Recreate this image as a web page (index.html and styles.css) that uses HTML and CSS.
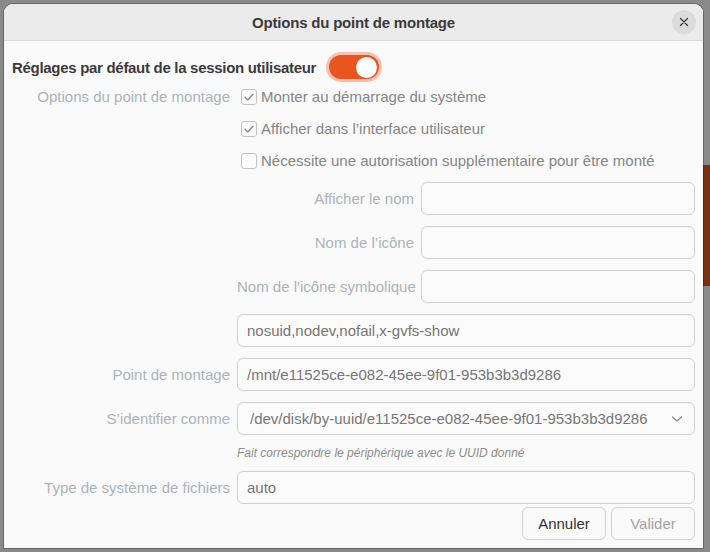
FILE: index.html
```html
<!DOCTYPE html>
<html lang="fr">
<head>
<meta charset="utf-8">
<title>Options du point de montage</title>
<link rel="stylesheet" href="styles.css">
</head>
<body>
<div class="desk-strip"></div>
<div class="dialog">
  <div class="header">
    <div class="title">Options du point de montage</div>
    <div class="close">
      <svg width="10" height="10" viewBox="0 0 10 10"><path d="M1.5 1.5 L8.5 8.5 M8.5 1.5 L1.5 8.5" stroke="#3a3a3a" stroke-width="1.3" stroke-linecap="round" fill="none"/></svg>
    </div>
  </div>
  <div class="content">
    <div class="top-row">
      <span class="bold-label">Réglages par défaut de la session utilisateur</span>
      <span class="switch"><span class="knob"></span></span>
    </div>
    <div class="form">
      <div class="label">Options du point de montage</div>
      <div class="check-row">
        <span class="box checked"><svg width="16" height="16" viewBox="0 0 16 16"><path d="M4 8.2 L6.8 11 L12 5.2" stroke="#888" stroke-width="1.4" fill="none" stroke-linecap="round" stroke-linejoin="round"/></svg></span>
        <span>Monter au démarrage du système</span>
      </div>
      <div></div>
      <div class="check-row">
        <span class="box checked"><svg width="16" height="16" viewBox="0 0 16 16"><path d="M4 8.2 L6.8 11 L12 5.2" stroke="#888" stroke-width="1.4" fill="none" stroke-linecap="round" stroke-linejoin="round"/></svg></span>
        <span>Afficher dans l’interface utilisateur</span>
      </div>
      <div></div>
      <div class="check-row">
        <span class="box"></span>
        <span>Nécessite une autorisation supplémentaire pour être monté</span>
      </div>
      <div></div>
      <div class="subgrid">
        <div class="label">Afficher le nom</div>
        <div class="entry"></div>
        <div class="label">Nom de l’icône</div>
        <div class="entry"></div>
        <div class="label">Nom de l'icône symbolique</div>
        <div class="entry"></div>
      </div>
      <div></div>
      <div class="entry">nosuid,nodev,nofail,x-gvfs-show</div>
      <div class="label">Point de montage</div>
      <div class="entry">/mnt/e11525ce-e082-45ee-9f01-953b3b3d9286</div>
      <div class="label">S’identifier comme</div>
      <div class="entry combo">
        <span>/dev/disk/by-uuid/e11525ce-e082-45ee-9f01-953b3b3d9286</span>
        <svg width="12" height="8" viewBox="0 0 12 8"><path d="M1.5 2 L6 6 L10.5 2" stroke="#8a8a8a" stroke-width="1.2" fill="none" stroke-linecap="round" stroke-linejoin="round"/></svg>
      </div>
      <div></div>
      <div class="hint">Fait correspondre le périphérique avec le UUID donné</div>
      <div class="label">Type de système de fichiers</div>
      <div class="entry">auto</div>
    </div>
    <div class="buttons">
      <div class="btn">Annuler</div>
      <div class="btn disabled">Valider</div>
    </div>
  </div>
</div>
</body>
</html>
```
FILE: styles.css
```css
html, body {
  margin: 0;
  padding: 0;
}
body {
  width: 710px;
  height: 552px;
  overflow: hidden;
  background: #8a8a8a;
  position: relative;
  font-family: "Liberation Sans", Arial, sans-serif;
  font-size: 15px;
  color: #3d3d3d;
}
.desk-strip {
  position: absolute;
  right: 0;
  top: 165px;
  width: 8px;
  height: 121px;
  background: #7b3115;
}
.dialog {
  position: relative;
  margin: 4px 0 0 4px;
  width: 699px;
  height: 544px;
  background: #fafafa;
  border-radius: 9px 9px 0 0;
  box-shadow: 0 0 0 1px rgba(0,0,0,0.25);
  overflow: hidden;
  display: flex;
  flex-direction: column;
}
.header {
  height: 36px;
  flex: none;
  background: #ebebeb;
  border-bottom: 1px solid #dadada;
  display: flex;
  align-items: center;
  justify-content: center;
  position: relative;
}
.title {
  font-weight: bold;
  letter-spacing: -0.2px;
  color: #3a3a3a;
  margin-top: 1px;
}
.close {
  position: absolute;
  right: 7px;
  top: 6px;
  width: 24px;
  height: 24px;
  border-radius: 50%;
  background: #dcdcdc;
  display: flex;
  align-items: center;
  justify-content: center;
}
.content {
  padding: 11px 8px 8px 8px;
  display: flex;
  flex-direction: column;
}
.top-row {
  height: 30px;
  display: flex;
  align-items: center;
}
.bold-label {
  font-weight: bold;
  letter-spacing: -0.3px;
  color: #3a3a3a;
}
.switch {
  margin-left: 13px;
  width: 50px;
  height: 24px;
  border-radius: 13px;
  background: #e95420;
  box-shadow: 0 0 0 3px #f7c3b0;
  display: flex;
  align-items: center;
  justify-content: flex-end;
  padding: 0 2px;
  box-sizing: border-box;
}
.knob {
  width: 21px;
  height: 21px;
  border-radius: 50%;
  background: #ffffff;
}
.form {
  margin-top: 4px;
  display: grid;
  grid-template-columns: 218px 458px;
  grid-template-rows: 21px 21px 21px 121px 33px 33px 33px 14px 33px;
  column-gap: 7px;
  row-gap: 11px;
}
.label {
  color: #aab3bb;
  text-align: right;
  align-self: center;
  white-space: nowrap;
}
.check-row {
  display: flex;
  align-items: center;
  color: #858585;
  padding-left: 4px;
  white-space: nowrap;
}
.box {
  width: 16px;
  height: 16px;
  box-sizing: border-box;
  border: 1px solid #c2c2c2;
  border-radius: 3px;
  background: #fcfcfc;
  margin-right: 4px;
  display: flex;
  align-items: center;
  justify-content: center;
  flex: none;
}
.box svg {
  margin: -1px;
}
.subgrid {
  display: grid;
  grid-template-columns: 177px 274px;
  grid-template-rows: 33px 33px 33px;
  column-gap: 7px;
  row-gap: 11px;
}
.entry {
  height: 33px;
  box-sizing: border-box;
  border: 1px solid #d0d0d0;
  border-radius: 6px;
  background: #fbfbfb;
  color: #767676;
  padding: 0 9px;
  display: flex;
  align-items: center;
  white-space: nowrap;
  overflow: hidden;
}
.combo {
  padding-left: 12px;
  padding-right: 11px;
  justify-content: space-between;
}
.hint {
  font-style: italic;
  font-size: 12px;
  color: #8c8c8c;
  align-self: center;
  white-space: nowrap;
}
.buttons {
  margin-top: 3px;
  display: flex;
  justify-content: flex-end;
  gap: 5px;
}
.btn {
  width: 84px;
  height: 33px;
  box-sizing: border-box;
  border: 1px solid #d0d0d0;
  border-radius: 6px;
  background: #fafafa;
  display: flex;
  align-items: center;
  justify-content: center;
  color: #333333;
}
.btn.disabled {
  color: #a3a3a3;
}
```
